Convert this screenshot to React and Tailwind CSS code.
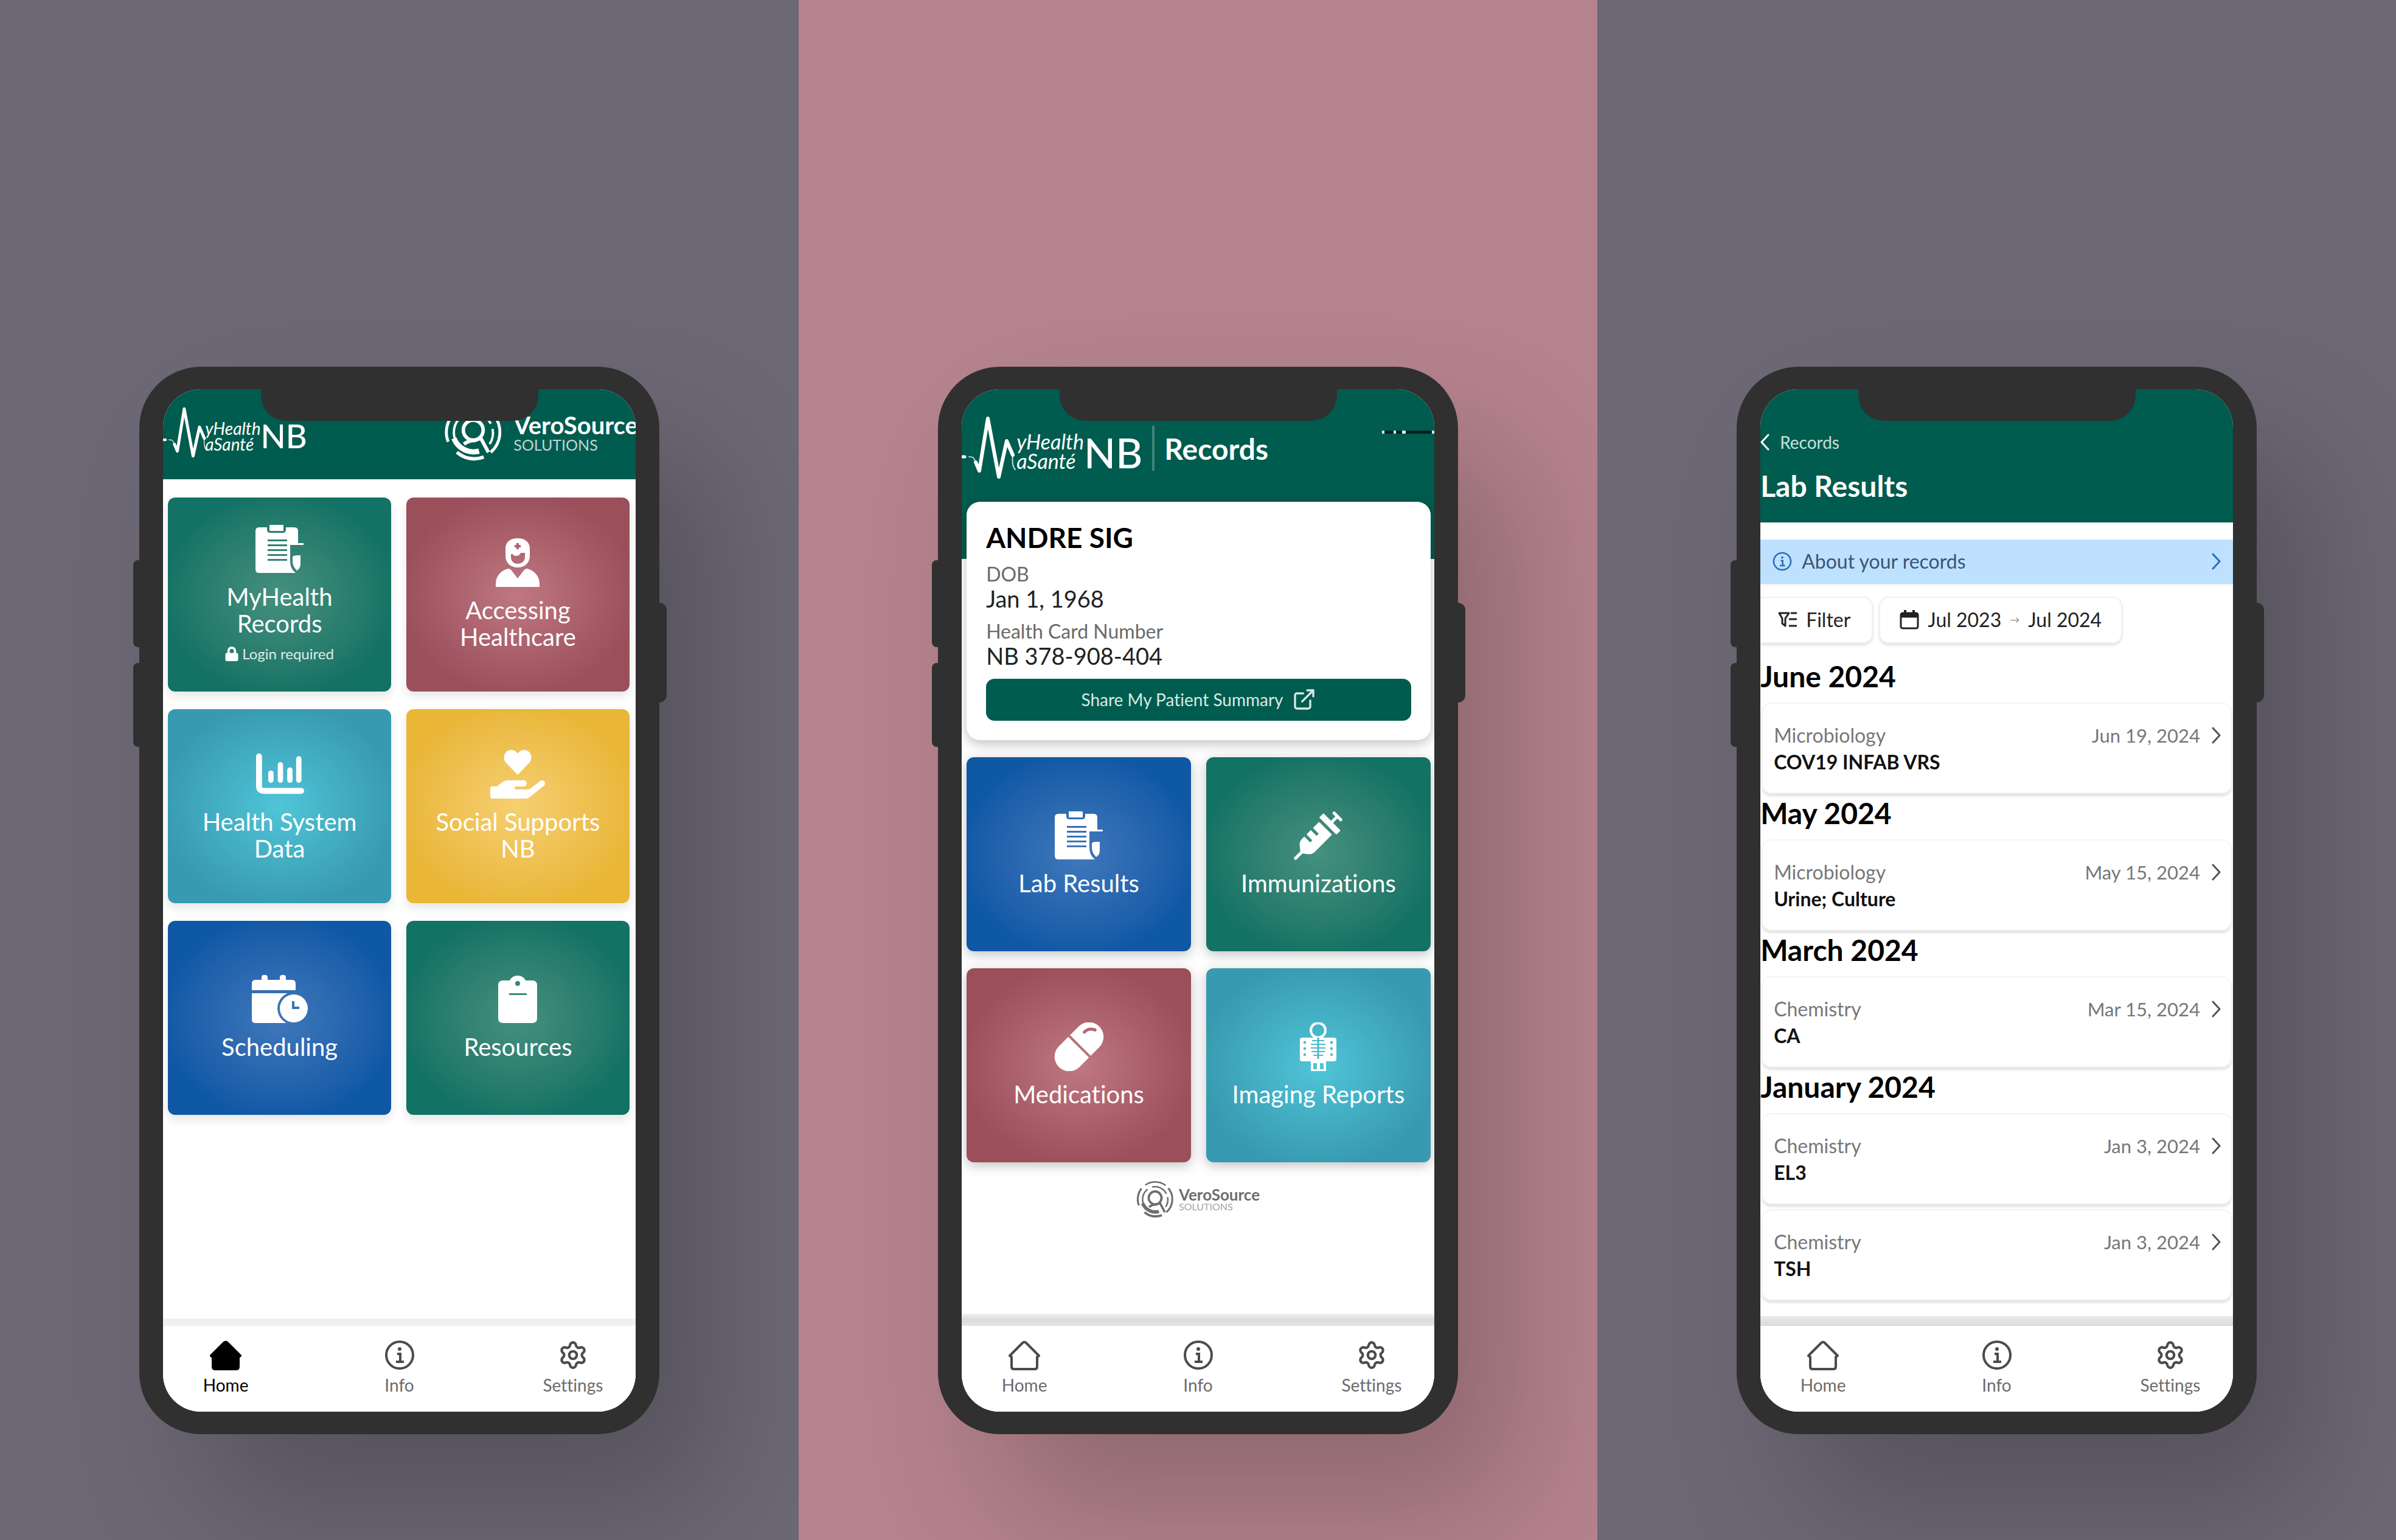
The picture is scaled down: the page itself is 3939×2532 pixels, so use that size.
import { Settings, ExternalLink } from "lucide-react";
import { FaHandHoldingHeart, FaSyringe, FaLock } from "react-icons/fa";

/* ---------- tile icons ---------- */

function ClipboardIcon() {
  return (
    <svg viewBox="0 0 80 80" className="h-20 w-20" fill="currentColor" aria-hidden="true">
      <path
        fillRule="evenodd"
        d="M6 4H19V8Q19 13 24 13H45Q50 13 50 8V4H64Q70 4 70 10V30H79V33H57V60Q57 72 66 79H6Q0 79 0 73V10Q0 4 6 4ZM20 24V27H52V24ZM20 32V35H52V32ZM20 40V43H52V40ZM20 48V51H52V48ZM20 56V59H52V56Z"
      />
      <rect x="23" y="0" width="23" height="10" rx="1" />
      <path d="M61 52Q64 50 68 50H74V64Q74 72 68 75Q61 68 61 60Z" />
    </svg>
  );
}

function PersonIcon() {
  return (
    <svg viewBox="0 0 80 80" className="h-20 w-20" fill="currentColor" aria-hidden="true">
      <path
        fillRule="evenodd"
        d="M40 0C52 0 60 6 60 17V29C60 40 52 48 40 48S20 40 20 29V17C20 6 28 0 40 0ZM38 8V11H35V15H38V18H42V15H45V11H42V8ZM29 26V31C29 38 34 42 40 42S52 38 52 31V24H45Q43 29 37 29Q33 29 32 26Z"
      />
      <path d="M4 80V75C4 63 12 53 24 50Q28 50 30 53L40 66L50 53Q52 50 56 50C68 53 76 63 76 75V80Z" />
    </svg>
  );
}

function ChartIcon() {
  return (
    <svg viewBox="0 0 82 80" className="h-20 w-20" fill="none" stroke="currentColor" strokeLinecap="round" aria-hidden="true">
      <path d="M6 10V60Q6 68 14 68H77" strokeWidth="10" strokeLinejoin="round" />
      <path d="M26 38V50M42 24V50M58 33V50M73 14V50" strokeWidth="9" />
    </svg>
  );
}

function CalendarClockIcon() {
  return (
    <svg viewBox="0 0 92 80" className="h-20 w-[92px]" fill="currentColor" aria-hidden="true">
      <mask id="clock-cut">
        <rect width="92" height="80" fill="#fff" />
        <circle cx="69" cy="55" r="27" fill="#000" />
      </mask>
      <rect x="16" y="0" width="10" height="16" rx="4" />
      <rect x="46" y="0" width="10" height="16" rx="4" />
      <path d="M6 8H66Q72 8 72 14V25H0V14Q0 8 6 8Z" />
      <path mask="url(#clock-cut)" d="M0 30H72V79H6Q0 79 0 73Z" />
      <path
        fillRule="evenodd"
        d="M69 32A23 23 0 1 1 69 78A23 23 0 1 1 69 32ZM66 43V56H78V52H70V43Z"
      />
    </svg>
  );
}

function ResourceIcon() {
  return (
    <svg viewBox="0 0 64 80" className="h-20 w-16" fill="currentColor" aria-hidden="true">
      <path
        fillRule="evenodd"
        d="M8 9H19Q23 1 32 1T45 9H56Q64 9 64 17V71Q64 79 56 79H8Q0 79 0 71V17Q0 9 8 9ZM32 10A4 4 0 1 0 32 18A4 4 0 1 0 32 10ZM18 30V33H47V30Z"
      />
    </svg>
  );
}

function CapsuleIcon() {
  return (
    <svg viewBox="0 0 82 80" className="h-20 w-[82px]" aria-hidden="true">
      <mask id="capsule-cut" maskUnits="userSpaceOnUse" x="-20" y="-20" width="130" height="120">
        <rect x="-20" y="-20" width="130" height="120" fill="#fff" />
        <path d="M0 39H82" stroke="#000" strokeWidth="4" />
        <path d="M30 17Q30 6 40 2" fill="none" stroke="#000" strokeWidth="5" strokeLinecap="round" />
      </mask>
      <g transform="rotate(45 41 40)">
        <rect mask="url(#capsule-cut)" x="17" y="-7" width="48" height="94" rx="24" fill="currentColor" />
      </g>
    </svg>
  );
}

function ImagingIcon() {
  return (
    <svg viewBox="0 0 64 80" className="h-20 w-16" fill="none" stroke="currentColor" aria-hidden="true">
      <circle cx="32" cy="13" r="12" strokeWidth="4" />
      <path
        fill="currentColor"
        stroke="none"
        fillRule="evenodd"
        d="M6 25H58Q62 25 62 29V60Q62 64 58 64H45V80H20V64H6Q2 64 2 60V29Q2 25 6 25ZM8 31V35H12V31ZM8 41V45H12V41ZM8 51V55H12V51ZM52 31V35H56V31ZM52 41V45H56V41ZM52 51V55H56V51ZM24 67V77H30V67ZM35 67V77H41V67Z"
      />
      <path d="M22 30H42M20 36H44M20 42H44M21 48H43M24 54H40" stroke="#4bbacd" strokeWidth="2" />
      <path d="M32 25V60" stroke="#4bbacd" strokeWidth="3" />
    </svg>
  );
}

/* ---------- small icons ---------- */

function HomeIcon({ filled }) {
  return (
    <svg viewBox="0 0 54 50" className="h-[50px] w-[54px]" fill={filled ? "currentColor" : "none"} stroke="currentColor" strokeWidth="4" strokeLinejoin="round" strokeLinecap="round" aria-hidden="true">
      <path d="M3 26L24 5Q27 2 30 5L51 26L48 28V44Q48 48 44 48H10Q6 48 6 44V28Z" />
    </svg>
  );
}

function InfoIcon({ className }) {
  return (
    <svg viewBox="0 0 50 50" className={className} fill="none" stroke="currentColor" strokeWidth="4" aria-hidden="true">
      <circle cx="25" cy="25" r="22" />
      <path d="M21 23H26V36M19 36H32" />
      <circle cx="25" cy="15" r="3" fill="currentColor" stroke="none" />
    </svg>
  );
}

function Chevron({ className, left }) {
  return (
    <svg viewBox="0 0 16 28" className={className} fill="none" stroke="currentColor" strokeWidth="3" strokeLinecap="round" strokeLinejoin="round" aria-hidden="true">
      <path d={left ? "M13 2L2 14L13 26" : "M3 2L14 14L3 26"} />
    </svg>
  );
}

function FilterIcon() {
  return (
    <svg viewBox="0 0 32 28" className="h-7 w-8" fill="none" stroke="currentColor" strokeWidth="3" strokeLinejoin="round" aria-hidden="true">
      <path d="M2 3H18L12 12V24L7 20V12Z" />
      <path d="M21 3H31M18 13H31M18 24H31" />
    </svg>
  );
}

function CalendarIcon() {
  return (
    <svg viewBox="0 0 32 32" className="h-8 w-8" fill="none" stroke="currentColor" aria-hidden="true">
      <rect x="2" y="5" width="28" height="25" rx="3" strokeWidth="3" />
      <path d="M2 9H30" strokeWidth="7" />
      <path d="M9 0V8M23 0V8" strokeWidth="4" />
    </svg>
  );
}

/* ---------- logos ---------- */

function MyHealthLogo({ large }) {
  return (
    <div className="flex items-center text-white" aria-label="MyHealth MaSanté NB">
      <svg
        viewBox="0 0 90 104"
        className={large ? "h-[104px] w-[90px]" : "h-[84px] w-[73px]"}
        fill="none"
        stroke="currentColor"
        strokeLinejoin="round"
        strokeLinecap="round"
        aria-hidden="true"
      >
        <path d="M1 67H5" strokeWidth="5" />
        <path d="M12 67C19 67 20 68 23 76" strokeWidth="2" opacity=".7" />
        <path d="M23 76L29 90L43 4L61 100L74 41L84 64" strokeWidth="6" />
        <path d="M84 64Q82 82 88 88" strokeWidth="2" opacity=".8" />
      </svg>
      <div className={large ? "pt-3 text-[34px] leading-8 italic" : "-ml-1 pt-3 text-[28px] leading-[26px] italic"}>
        <div>yHealth</div>
        <div>aSanté</div>
      </div>
      <div className={large ? "pt-4 text-[68px] leading-none font-medium" : "pt-3 text-[54px] leading-none font-medium"}>NB</div>
    </div>
  );
}

function VeroEmblem({ className }) {
  return (
    <svg viewBox="0 0 100 100" className={className} fill="none" stroke="currentColor" aria-hidden="true">
      <path d="M7 66A46 46 0 0 1 14 21" strokeWidth="5" />
      <path d="M24 12A46 46 0 0 1 78 13" strokeWidth="4" />
      <path d="M85 20A46 46 0 0 1 80 84" strokeWidth="5" />
      <path d="M22 84A45 45 0 0 0 68 92" strokeWidth="6" />
      <path d="M22 68A34 34 0 0 1 30 23" strokeWidth="4" />
      <path d="M42 17A34 34 0 0 1 80 35" strokeWidth="4" />
      <path d="M83 44A34 34 0 0 1 78 70" strokeWidth="4" />
      <path d="M17 60A36 36 0 0 0 60 82" strokeWidth="9" />
      <circle cx="50" cy="46" r="17" strokeWidth="6" />
      <path d="M34 70Q42 64 52 64L63 60L76 84" strokeWidth="6" />
    </svg>
  );
}

/* ---------- phone shell ---------- */

function Phone({ children }) {
  return (
    <div className="relative aspect-[855/1756] w-[65.1%] rounded-[101px] bg-[#303030] px-[39px] py-[37px] shadow-[100px_130px_220px_rgba(0,0,0,0.2)]">
      <div className="absolute top-[318px] -left-2.5 h-[143px] w-5 rounded-l-lg bg-[#303030]" />
      <div className="absolute top-[487px] -left-2.5 h-[138px] w-5 rounded-l-lg bg-[#303030]" />
      <div className="absolute top-[388px] -right-3 h-[164px] w-5 rounded-r-xl bg-[#303030]" />
      <div className="relative flex h-full flex-col overflow-hidden rounded-[62px] bg-white">
        <div className="absolute top-0 left-1/2 z-10 h-[52px] w-[456px] -translate-x-1/2 rounded-b-[42px] bg-[#303030]" />
        {children}
      </div>
    </div>
  );
}

const strips = {
  light: "h-3 bg-[#f0f0f0]",
  tall: "h-5 bg-linear-to-b from-[#f0f0f0] via-[#dcdcdc] to-[#e4e4e4]",
  mid: "h-4 bg-linear-to-b from-[#ebebeb] to-[#dadada]",
};

function TabBar({ strip, active }) {
  const home = active ? "text-black" : "text-[#4b4b4b]";
  const item = "flex w-[130px] flex-col items-center gap-2";
  return (
    <div className="mt-auto">
      <div className={strips[strip]} />
      <nav className="flex h-[141px] justify-between bg-white px-[38px] pt-[23px] text-[28px] leading-8 text-[#6b6b6b]">
        <a href="#home" className={item}>
          <span className={home}>
            <HomeIcon filled={active} />
          </span>
          <span className={active ? "text-black" : ""}>Home</span>
        </a>
        <a href="#info" className={item}>
          <InfoIcon className="h-[50px] w-[50px] text-[#4b4b4b]" />
          <span>Info</span>
        </a>
        <a href="#settings" className={item}>
          <Settings className="h-[50px] w-[54px] text-[#4b4b4b]" strokeWidth={2} />
          <span>Settings</span>
        </a>
      </nav>
    </div>
  );
}

const fills = {
  green: "bg-radial from-[#45907f] to-[#127264] to-75%",
  rose: "bg-radial from-[#bf7882] to-[#9a4f5b] to-75%",
  teal: "bg-radial from-[#50c5d8] to-[#389ab0] to-75%",
  gold: "bg-radial from-[#f6cf70] to-[#e9b636] to-75%",
  blue: "bg-radial from-[#4078ba] to-[#0e58a6] to-75%",
};

function Tile({ fill, icon, label, locked, strong }) {
  return (
    <button
      type="button"
      className={`flex h-[319px] flex-col items-center justify-center rounded-xl px-8 text-white ${fills[fill]} ${
        strong ? "shadow-[0_5px_20px_rgba(0,0,0,0.25)]" : "shadow-[0_8px_16px_rgba(0,0,0,0.1)]"
      }`}
    >
      {icon}
      <span className="mt-4 text-[40px] leading-11">{label}</span>
      {locked && (
        <span className="mt-3 flex items-center gap-1.5 text-2xl leading-8 text-white/85">
          <FaLock className="h-6 w-[22px] text-white" aria-hidden="true" />
          Login required
        </span>
      )}
    </button>
  );
}

/* ---------- screens ---------- */

function HomeScreen() {
  return (
    <Phone>
      <header className="flex h-[148px] items-center justify-between bg-[#005c4e] pb-1.5">
        <MyHealthLogo />
        <div className="-mr-1 flex items-center gap-[18px] text-white">
          <VeroEmblem className="h-[96px] w-[96px]" />
          <div className="pt-1">
            <div className="text-[40px] leading-9 font-bold">VeroSource</div>
            <div className="text-[25px] leading-7 text-white/75">SOLUTIONS</div>
          </div>
        </div>
      </header>
      <main className="grid grid-cols-2 gap-x-[25px] gap-y-[29px] pt-[30px] pr-2.5 pl-2">
        <Tile fill="green" icon={<ClipboardIcon />} label="MyHealth Records" locked />
        <Tile fill="rose" icon={<PersonIcon />} label="Accessing Healthcare" />
        <Tile fill="teal" icon={<ChartIcon />} label="Health System Data" />
        <Tile fill="gold" icon={<FaHandHoldingHeart className="h-20 w-[90px]" aria-hidden="true" />} label="Social Supports NB" />
        <Tile fill="blue" icon={<CalendarClockIcon />} label="Scheduling" />
        <Tile fill="green" icon={<ResourceIcon />} label="Resources" />
      </main>
      <TabBar strip="light" active />
    </Phone>
  );
}

function RecordsScreen() {
  return (
    <Phone>
      <header className="flex h-[279px] items-start bg-[#005c4e] pt-[44px]">
        <MyHealthLogo large />
        <div className="mt-4 ml-4 h-[74px] w-1 bg-[#3f8478]" />
        <h1 className="mt-6 ml-4 text-[48px] leading-[60px] font-bold text-white">Records</h1>
        <svg viewBox="0 0 86 5" className="mt-6 ml-auto h-[5px] w-[86px]" aria-hidden="true">
          <rect width="86" height="5" fill="#00231d" />
          <path d="M0 2.500H4M19 2.500H23M33 2.500H39M82 2.500H86" stroke="#d9f5ef" strokeWidth="5" />
        </svg>
      </header>
      <section className="mr-1.5 ml-2 -mt-[94px] rounded-[22px] bg-white px-8 pt-[31px] pb-8 shadow-[0_6px_20px_rgba(0,0,0,0.25)]">
        <h2 className="text-[46px] leading-14 font-bold text-black">ANDRE SIG</h2>
        <dl>
          <dt className="mt-3 text-[32px] leading-10 text-[#6a6a6a]">DOB</dt>
          <dd className="text-[38px] leading-10 text-[#222]">Jan 1, 1968</dd>
          <dt className="mt-3.5 text-[32px] leading-10 text-[#6a6a6a]">Health Card Number</dt>
          <dd className="text-[38px] leading-10 text-[#222]">NB 378-908-404</dd>
        </dl>
        <button type="button" className="mt-[18px] flex h-[69px] w-full items-center justify-center gap-3.5 rounded-[14px] bg-[#005c4e] text-[28px] leading-8 text-[#d5ebe6]">
          Share My Patient Summary
          <ExternalLink className="h-10 w-10" strokeWidth={2} aria-hidden="true" />
        </button>
      </section>
      <main className="grid grid-cols-2 gap-x-[25px] gap-y-7 pt-7 pr-1.5 pl-2">
        <Tile strong fill="blue" icon={<ClipboardIcon />} label="Lab Results" />
        <Tile strong fill="green" icon={<FaSyringe className="h-20 w-20" aria-hidden="true" />} label="Immunizations" />
        <Tile strong fill="rose" icon={<CapsuleIcon />} label="Medications" />
        <Tile strong fill="teal" icon={<ImagingIcon />} label="Imaging Reports" />
      </main>
      <div className="mt-[30px] flex items-center justify-center gap-2">
        <VeroEmblem className="h-[62px] w-[62px] text-[#6d6d6d]" />
        <div>
          <div className="text-[26px] leading-6 font-bold text-[#6d6d6d]">VeroSource</div>
          <div className="text-base leading-4 text-[#a5a5a5]">SOLUTIONS</div>
        </div>
      </div>
      <TabBar strip="tall" />
    </Phone>
  );
}

const months = [
  { month: "June 2024", rows: [["Microbiology", "COV19 INFAB VRS", "Jun 19, 2024"]] },
  { month: "May 2024", rows: [["Microbiology", "Urine; Culture", "May 15, 2024"]] },
  { month: "March 2024", rows: [["Chemistry", "CA", "Mar 15, 2024"]] },
  {
    month: "January 2024",
    rows: [
      ["Chemistry", "EL3", "Jan 3, 2024"],
      ["Chemistry", "TSH", "Jan 3, 2024"],
    ],
  },
];

function LabScreen() {
  const pill = "flex h-[77px] items-center border-2 border-[#f0f0f2] bg-white text-[32px] leading-10 text-[#222] shadow-[0_3px_4px_rgba(0,0,0,0.12)]";
  return (
    <Phone>
      <header className="bg-[#005c4e] pt-[71px] pb-8 text-white">
        <a href="#records" className="flex items-center gap-4 text-[28px] leading-8 text-[#c6e2dc]">
          <Chevron left className="h-7 w-4 text-white" />
          Records
        </a>
        <h1 className="pt-7 text-[48px] leading-14 font-bold">Lab Results</h1>
      </header>
      <main>
        <button type="button" className="mt-7 flex h-[73px] w-full items-center gap-4 bg-[#bee1ff] pr-5 pl-5 text-[32px] text-[#3a5573] shadow-[0_3px_3px_rgba(0,0,0,0.05)]">
          <InfoIcon className="h-8 w-8 text-[#2a6dbb]" />
          About your records
          <Chevron className="ml-auto h-7 w-4 text-[#2a6dbb]" />
        </button>
        <div className="mt-[21px] flex gap-2.5">
          <button type="button" className={`${pill} gap-3.5 rounded-r-2xl border-l-0 pr-[35px] pl-[29px]`}>
            <FilterIcon />
            Filter
          </button>
          <button type="button" className={`${pill} gap-3.5 rounded-2xl pr-8 pl-8`}>
            <CalendarIcon />
            Jul 2023
            <span className="text-base text-[#888]">→</span>
            Jul 2024
          </button>
        </div>
        <div className="pt-[22px]">
          {months.map(({ month, rows }) => (
            <section key={month}>
              <h2 className="pb-3 text-[48px] leading-[63px] font-bold text-black">{month}</h2>
              <ul className="flex flex-col gap-2 px-0.5">
                {rows.map(([kind, name, date]) => (
                  <li key={name}>
                    <a
                      href="#result"
                      className="flex h-[150px] justify-between rounded-2xl border-2 border-[#f4f4f5] pt-[30px] pr-4 pl-[18px] text-[32px] leading-11 shadow-[0_4px_4px_rgba(0,0,0,0.12)]"
                    >
                      <span className="flex flex-col">
                        <span className="text-[#777]">{kind}</span>
                        <span className="font-bold text-[#111]">{name}</span>
                      </span>
                      <span className="flex h-11 items-center gap-[18px] text-[31px] text-[#777]">
                        {date}
                        <Chevron className="h-7 w-4 text-[#555]" />
                      </span>
                    </a>
                  </li>
                ))}
              </ul>
            </section>
          ))}
        </div>
      </main>
      <TabBar strip="mid" />
    </Phone>
  );
}

export default function App() {
  const panel = "flex min-h-screen flex-col items-center justify-end overflow-hidden pb-[174px]";
  return (
    <div className="grid grid-cols-3 font-['Lato',sans-serif] [font-variant-ligatures:none]">
      <div className={`${panel} bg-[#6d6875]`}>
        <HomeScreen />
      </div>
      <div className={`${panel} bg-[#b5838d]`}>
        <RecordsScreen />
      </div>
      <div className={`${panel} bg-[#6d6875]`}>
        <LabScreen />
      </div>
    </div>
  );
}
